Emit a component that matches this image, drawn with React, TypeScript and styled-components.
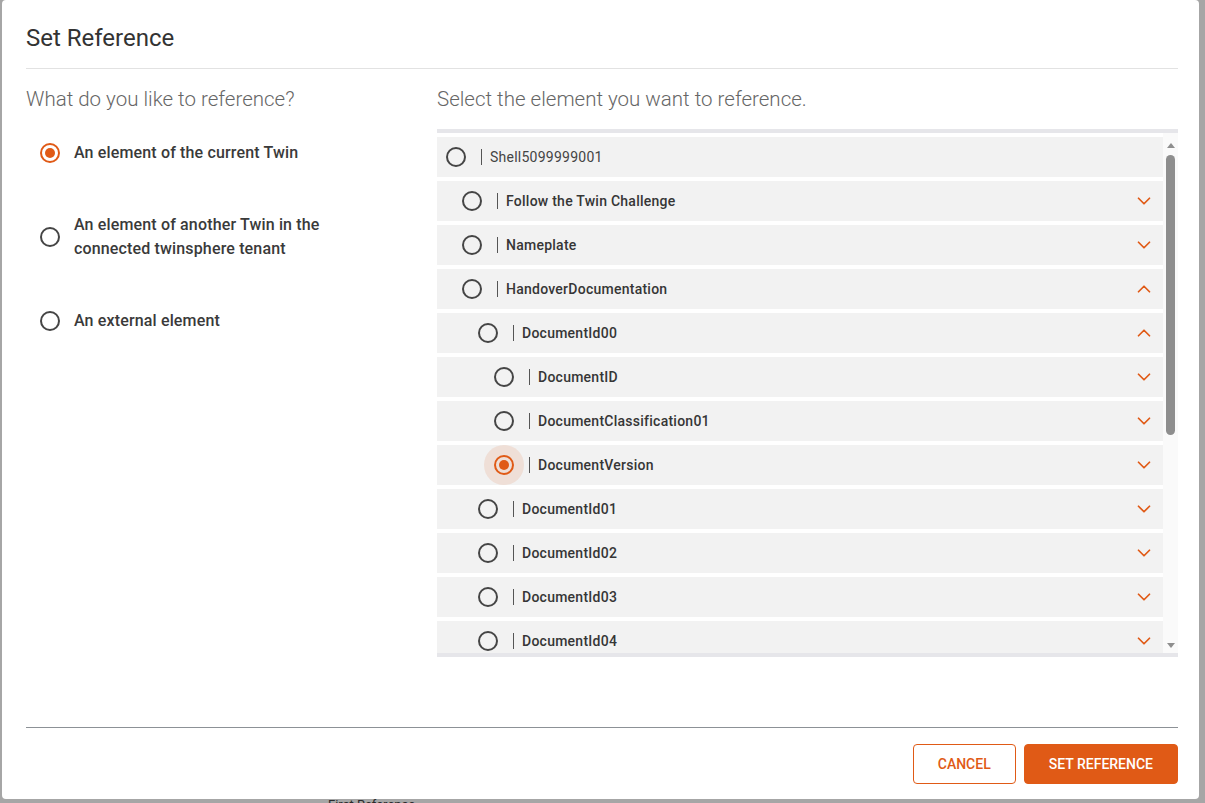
import React, { useState } from 'react';
import styled, { createGlobalStyle } from 'styled-components';
import { ChevronDown, ChevronUp } from 'lucide-react';

const ORANGE = '#e05a16';
const SCROLL_GREY = '#8e8e8e';

const GlobalStyle = createGlobalStyle`
  html, body {
    margin: 0;
    padding: 0;
    height: 803px;
    overflow: hidden;
    background: #a6a6a6;
    font-family: Roboto, "Liberation Sans", Arial, sans-serif;
  }
  * { box-sizing: border-box; }
`;

type Expand = 'none' | 'down' | 'up';

interface TreeItem {
  id: string;
  label: string;
  level: number;
  expand: Expand;
  root?: boolean;
}

const TREE: TreeItem[] = [
  { id: 'shell', label: 'Shell5099999001', level: 0, expand: 'none', root: true },
  { id: 'ftc', label: 'Follow the Twin Challenge', level: 1, expand: 'down' },
  { id: 'np', label: 'Nameplate', level: 1, expand: 'down' },
  { id: 'hd', label: 'HandoverDocumentation', level: 1, expand: 'up' },
  { id: 'd00', label: 'DocumentId00', level: 2, expand: 'up' },
  { id: 'did', label: 'DocumentID', level: 3, expand: 'down' },
  { id: 'dc01', label: 'DocumentClassification01', level: 3, expand: 'down' },
  { id: 'dv', label: 'DocumentVersion', level: 3, expand: 'down' },
  { id: 'd01', label: 'DocumentId01', level: 2, expand: 'down' },
  { id: 'd02', label: 'DocumentId02', level: 2, expand: 'down' },
  { id: 'd03', label: 'DocumentId03', level: 2, expand: 'down' },
  { id: 'd04', label: 'DocumentId04', level: 2, expand: 'down' },
];

const OPTIONS = [
  { id: 'current', label: 'An element of the current Twin' },
  { id: 'other', label: 'An element of another Twin in the connected twinsphere tenant' },
  { id: 'external', label: 'An external element' },
];

export default function App() {
  const [mode, setMode] = useState('current');
  const [selected, setSelected] = useState('dv');

  return (
    <>
      <GlobalStyle />
      <Backdrop>
        <Dialog>
          <Header>
            <Title>Set Reference</Title>
          </Header>
          <Body>
            <Column>
              <Prompt>What do you like to reference?</Prompt>
              <OptionList>
                {OPTIONS.map((o) => (
                  <Option key={o.id} onClick={() => setMode(o.id)}>
                    <RadioHit>
                      <Radio $checked={mode === o.id} />
                    </RadioHit>
                    <OptionLabel>{o.label}</OptionLabel>
                  </Option>
                ))}
              </OptionList>
            </Column>
            <Column>
              <Prompt>Select the element you want to reference.</Prompt>
              <TreeFrame>
                <TreeViewport>
                  {TREE.map((item) => {
                    const active = selected === item.id;
                    return (
                      <TreeRow
                        key={item.id}
                        $level={item.level}
                        onClick={() => setSelected(item.id)}
                      >
                        <RadioHit $halo={active}>
                          <Radio $checked={active} />
                        </RadioHit>
                        <Separator />
                        <TreeLabel $root={item.root}>{item.label}</TreeLabel>
                        {item.expand === 'down' && (
                          <Chevron>
                            <ChevronDown size={22} strokeWidth={1.9} />
                          </Chevron>
                        )}
                        {item.expand === 'up' && (
                          <Chevron>
                            <ChevronUp size={22} strokeWidth={1.9} />
                          </Chevron>
                        )}
                      </TreeRow>
                    );
                  })}
                </TreeViewport>
                <ScrollRail>
                  <ArrowBox $pad={10}>
                    <ArrowUp />
                  </ArrowBox>
                  <Thumb />
                  <RailFill />
                  <ArrowBox $pad={8}>
                    <ArrowDown />
                  </ArrowBox>
                </ScrollRail>
              </TreeFrame>
            </Column>
          </Body>
          <Footer>
            <OutlineButton>Cancel</OutlineButton>
            <FilledButton>Set Reference</FilledButton>
          </Footer>
        </Dialog>
        <PageStrip>
          <PageText>First Reference</PageText>
        </PageStrip>
      </Backdrop>
    </>
  );
}

const Backdrop = styled.div`
  height: 803px;
  padding-left: 2px;
  overflow: hidden;
`;

const Dialog = styled.div`
  width: 1197px;
  height: 799px;
  background: #ffffff;
  border-radius: 4px;
  padding: 0 21px 0 24px;
  display: flex;
  flex-direction: column;
`;

const Header = styled.div`
  padding: 22px 0 14px;
  border-bottom: 1px solid #e2e2e2;
`;

const Title = styled.h2`
  margin: 0;
  font-size: 24px;
  line-height: 32px;
  font-weight: 400;
  color: #333333;
`;

const Body = styled.div`
  flex: 1;
  display: grid;
  grid-template-columns: 411px 1fr;
  padding-top: 18px;
`;

const Column = styled.div`
  display: flex;
  flex-direction: column;
  min-width: 0;
`;

const Prompt = styled.div`
  font-size: 20.5px;
  line-height: 24px;
  font-weight: 300;
  color: #666666;
  margin-bottom: 18px;
  white-space: nowrap;
`;

const OptionList = styled.div`
  display: flex;
  flex-direction: column;
  gap: 24px;
`;

const Option = styled.label`
  display: flex;
  align-items: center;
  gap: 14px;
  padding: 12px 0 12px 14px;
  cursor: pointer;
`;

const OptionLabel = styled.span`
  max-width: 290px;
  font-size: 16px;
  line-height: 24px;
  font-weight: 500;
  letter-spacing: 0.15px;
  color: #3a3a3a;
`;

const RadioHit = styled.span<{ $halo?: boolean }>`
  flex-shrink: 0;
  width: 40px;
  height: 40px;
  margin: -10px;
  border-radius: 50%;
  display: flex;
  align-items: center;
  justify-content: center;
  background: ${({ $halo }) => ($halo ? 'rgba(224, 90, 22, 0.12)' : 'transparent')};
`;

const Radio = styled.span<{ $checked: boolean }>`
  position: relative;
  width: 20px;
  height: 20px;
  border-radius: 50%;
  border: 2px solid ${({ $checked }) => ($checked ? ORANGE : '#454545')};

  &::after {
    content: '';
    position: absolute;
    top: 50%;
    left: 50%;
    width: 10px;
    height: 10px;
    border-radius: 50%;
    transform: translate(-50%, -50%);
    background: ${ORANGE};
    opacity: ${({ $checked }) => ($checked ? 1 : 0)};
  }
`;

const TreeFrame = styled.div`
  display: flex;
  height: 528px;
  border-top: 4px solid #e6e6ea;
  border-bottom: 4px solid #e6e6ea;
`;

const TreeViewport = styled.div`
  flex: 1;
  min-width: 0;
  overflow: hidden;
  padding-top: 4px;
  display: flex;
  flex-direction: column;
  gap: 4px;
  background: #ffffff;
`;

const TreeRow = styled.div<{ $level: number }>`
  flex-shrink: 0;
  height: 40px;
  display: flex;
  align-items: center;
  background: #f2f2f2;
  padding-left: ${({ $level }) => 9 + $level * 16}px;
  padding-right: 8px;
  cursor: pointer;
`;

const Separator = styled.span`
  width: 1px;
  height: 16px;
  margin-left: 15px;
  background: #555555;
`;

const TreeLabel = styled.span<{ $root?: boolean }>`
  flex: 1;
  margin-left: 8px;
  font-size: 14px;
  letter-spacing: 0.25px;
  font-weight: ${({ $root }) => ($root ? 400 : 500)};
  color: ${({ $root }) => ($root ? '#444444' : '#363636')};
  white-space: nowrap;
`;

const Chevron = styled.span`
  display: flex;
  color: ${ORANGE};
`;

const ScrollRail = styled.div`
  width: 15px;
  flex-shrink: 0;
  display: flex;
  flex-direction: column;
  background: #fafafa;
`;

const ArrowBox = styled.div<{ $pad: number }>`
  height: 18px;
  padding-top: ${({ $pad }) => $pad}px;
  display: flex;
  justify-content: center;
`;

const ArrowUp = styled.span`
  width: 0;
  height: 0;
  border-left: 4.5px solid transparent;
  border-right: 4.5px solid transparent;
  border-bottom: 5.5px solid ${SCROLL_GREY};
`;

const ArrowDown = styled.span`
  width: 0;
  height: 0;
  border-left: 4.5px solid transparent;
  border-right: 4.5px solid transparent;
  border-top: 5.5px solid ${SCROLL_GREY};
`;

const Thumb = styled.div`
  height: 280px;
  margin: 4px 3px 0;
  border-radius: 4.5px;
  background: ${SCROLL_GREY};
`;

const RailFill = styled.div`
  flex: 1;
`;

const Footer = styled.div`
  display: flex;
  justify-content: flex-end;
  gap: 8px;
  padding: 16px 0 15px;
  border-top: 1px solid #8c9196;
`;

const ButtonBase = styled.button`
  height: 40px;
  padding: 0 24px;
  border-radius: 4px;
  font-family: Roboto, "Liberation Sans", Arial, sans-serif;
  font-size: 14px;
  font-weight: 500;
  text-transform: uppercase;
  cursor: pointer;
`;

const OutlineButton = styled(ButtonBase)`
  background: #ffffff;
  color: ${ORANGE};
  border: 1px solid ${ORANGE};
`;

const FilledButton = styled(ButtonBase)`
  background: ${ORANGE};
  color: #ffffff;
  border: 1px solid ${ORANGE};
`;

const PageStrip = styled.div`
  height: 4px;
  overflow: hidden;
  padding-left: 326px;
`;

const PageText = styled.div`
  font-size: 13px;
  line-height: 14px;
  color: #2b2b2b;
  margin-top: -1px;
`;
